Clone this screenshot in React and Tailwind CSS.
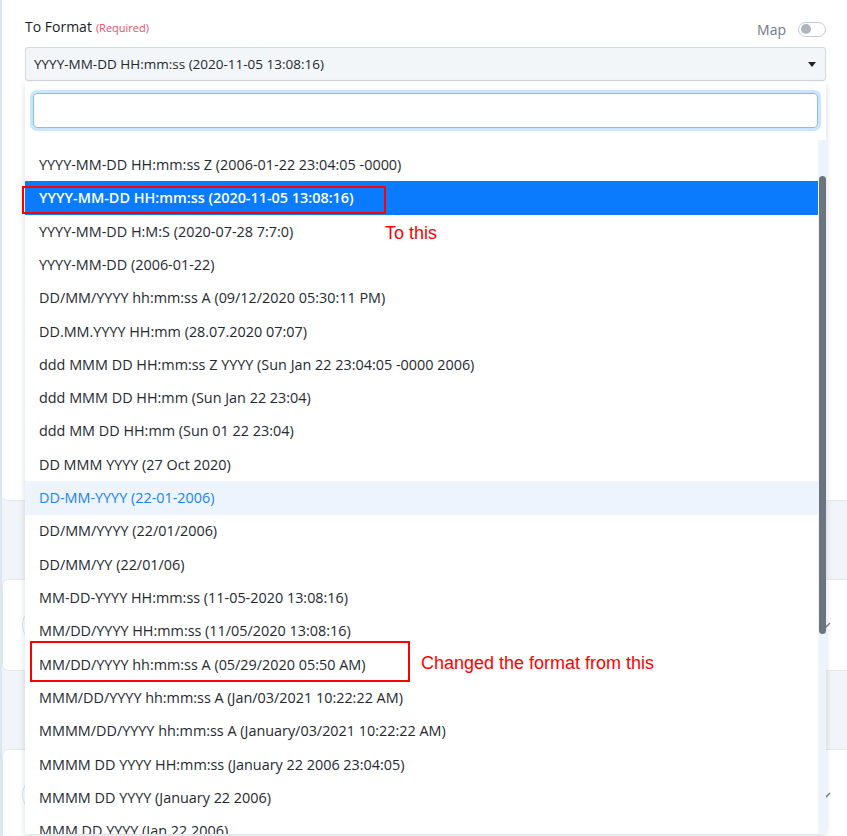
import React, { useState } from 'react';

const FORMATS = [
    'YYYY-MM-DD HH:mm:ss Z (2006-01-22 23:04:05 -0000)',
    'YYYY-MM-DD HH:mm:ss (2020-11-05 13:08:16)',
    'YYYY-MM-DD H:M:S (2020-07-28 7:7:0)',
    'YYYY-MM-DD (2006-01-22)',
    'DD/MM/YYYY hh:mm:ss A (09/12/2020 05:30:11 PM)',
    'DD.MM.YYYY HH:mm (28.07.2020 07:07)',
    'ddd MMM DD HH:mm:ss Z YYYY (Sun Jan 22 23:04:05 -0000 2006)',
    'ddd MMM DD HH:mm (Sun Jan 22 23:04)',
    'ddd MM DD HH:mm (Sun 01 22 23:04)',
    'DD MMM YYYY (27 Oct 2020)',
    'DD-MM-YYYY (22-01-2006)',
    'DD/MM/YYYY (22/01/2006)',
    'DD/MM/YY (22/01/06)',
    'MM-DD-YYYY HH:mm:ss (11-05-2020 13:08:16)',
    'MM/DD/YYYY HH:mm:ss (11/05/2020 13:08:16)',
    'MM/DD/YYYY hh:mm:ss A (05/29/2020 05:50 AM)',
    'MMM/DD/YYYY hh:mm:ss A (Jan/03/2021 10:22:22 AM)',
    'MMMM/DD/YYYY hh:mm:ss A (January/03/2021 10:22:22 AM)',
    'MMMM DD YYYY HH:mm:ss (January 22 2006 23:04:05)',
    'MMMM DD YYYY (January 22 2006)',
    'MMM DD YYYY (Jan 22 2006)',
];

const Chevron = () => (
    <svg width="10" height="6" viewBox="0 0 10 6" className="text-[#6b7b93]">
        <path d="M1 1l4 4 4-4" fill="none" stroke="currentColor" strokeWidth="1.4" />
    </svg>
);

// collapsed step cards sitting behind the open dropdown
const StepCard = () => (
    <div className="h-[92px] bg-white rounded-l-[6px] border border-[#e3e9f1] border-r-0 flex items-center pl-[19px] pr-[16px]">
        <div className="w-[38px] h-[38px] rounded-full border border-[#dbe5f3]" />
        <div className="flex-1" />
        <Chevron />
    </div>
);

export default function App() {
    const [selected, setSelected] = useState(1);
    const [hovered, setHovered] = useState(10);

    return (
        <div
            className="relative w-[847px] h-[836px] overflow-hidden bg-[#f1f4f8] border-l-2 border-[#dce6f3]"
            style={{ fontFamily: '"Open Sans", "Noto Sans", sans-serif' }}
        >
            <div className="flex flex-col gap-[78px]">
                {/* field card */}
                <div className="h-[501px] bg-white rounded-bl-[6px] border-b border-[#e3e9f1] pl-[23px] pr-[21px] pt-[14px]">
                    <div className="flex items-center justify-between h-[24px]">
                        <div className="flex items-baseline gap-[4px]">
                            <span className="text-[14px] text-[#1a1d22]">To Format</span>
                            <span className="text-[11px] text-[#e8506a]">(Required)</span>
                        </div>
                        <div className="flex items-center gap-[12px] pt-[6px]">
                            <span className="text-[14px] text-[#6d7a8c]">Map</span>
                            <div className="w-[28px] h-[15px] rounded-full border border-[#c3c9d2] bg-white flex items-center pl-[2px]">
                                <div className="w-[10px] h-[10px] rounded-full bg-[#adb5bd]" />
                            </div>
                        </div>
                    </div>
                    <div className="mt-[9px] h-[34px] bg-[#f3f6f9] border border-[#d3d8df] rounded-[3px] flex items-center pl-[8px] pr-[9px]">
                        <span className="flex-1 text-[13.5px] text-[#23272d]">{FORMATS[selected]}</span>
                        <svg width="8" height="5" viewBox="0 0 8 5">
                            <path d="M0 0h8L4 5z" fill="#222" />
                        </svg>
                    </div>
                </div>
                <StepCard />
                <StepCard />
            </div>

            {/* open dropdown */}
            <div className="absolute left-[23px] top-[82px] w-[801px] h-[752px] bg-white rounded-b-[4px] shadow-[0_2px_6px_rgba(40,60,90,0.18)] flex flex-col">
                <div className="px-[8px] pt-[11px] pb-[12px]">
                    <input
                        type="text"
                        className="w-full h-[35px] rounded-[4px] border border-[#80bdff] shadow-[0_0_0_3px_rgba(0,123,255,0.2)] outline-none px-[8px] text-[14px]"
                    />
                </div>
                <div className="relative flex-1 overflow-hidden pt-[8px]">
                    <ul className="pr-[8px]">
                        {FORMATS.map((f, i) => (
                            <li
                                key={f}
                                onClick={() => setSelected(i)}
                                onMouseEnter={() => setHovered(i)}
                                className={`h-[33.33px] flex items-center pl-[14px] text-[14.4px] whitespace-nowrap cursor-pointer ${
                                    i === selected
                                        ? 'bg-[#0a7bfd] text-white font-semibold'
                                        : i === hovered
                                        ? 'bg-[#edf4fd] text-[#1c82f2]'
                                        : 'text-[#25292f]'
                                }`}
                            >
                                {f}
                            </li>
                        ))}
                    </ul>
                    {/* scrollbar */}
                    <div className="absolute right-0 top-0 bottom-0 w-[8px] bg-[#eef4fc]">
                        <div className="absolute left-[1px] right-0 top-[36px] h-[458px] rounded-full bg-[#6c747e]" />
                    </div>
                </div>
            </div>

            {/* notes */}
            <div className="absolute left-[20px] top-[186px] w-[364px] h-[28px] border-2 border-[#ff0000]" />
            <span
                className="absolute left-[383px] top-[220px] text-[18px] text-[#ff0000]"
                style={{ fontFamily: '"Liberation Sans", Arial, sans-serif' }}
            >
                To this
            </span>
            <div className="absolute left-[28px] top-[641px] w-[380px] h-[41px] border-2 border-[#ff0000]" />
            <span
                className="absolute left-[419px] top-[650px] text-[18px] text-[#ff0000]"
                style={{ fontFamily: '"Liberation Sans", Arial, sans-serif' }}
            >
                Changed the format from this
            </span>
        </div>
    );
}
